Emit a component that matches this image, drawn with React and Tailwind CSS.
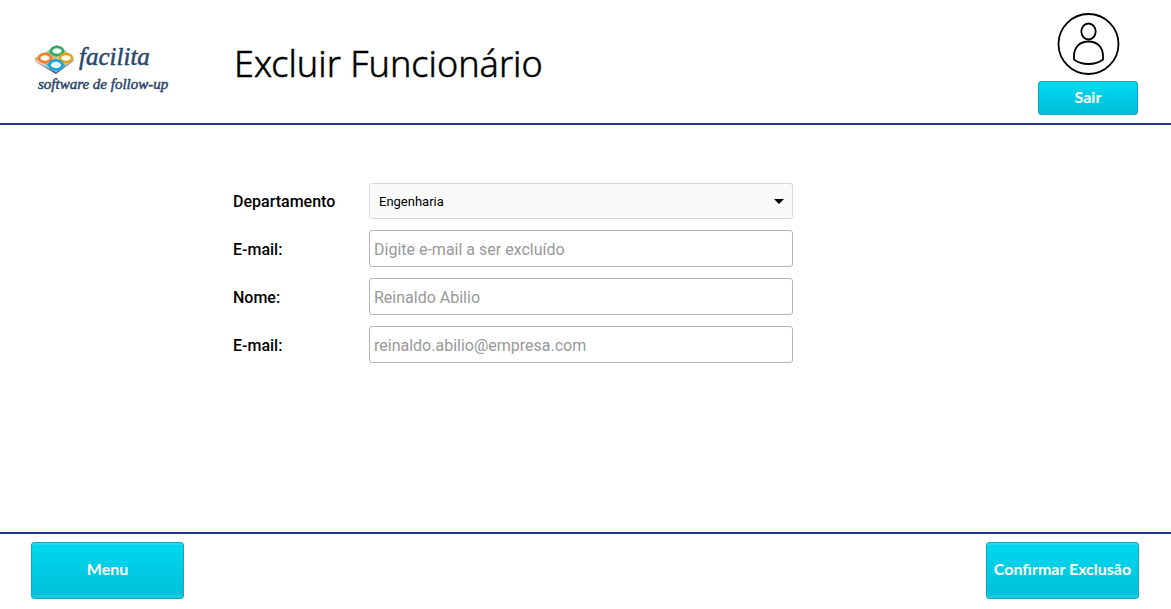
const buttonBase =
  'rounded-[3px] border border-[#14a9bd] bg-linear-to-b from-[#00d9f0] to-[#00bfd8] px-1 text-center font-[Lato,sans-serif] text-base font-bold text-white';
const footerButton =
  'h-[57px] min-w-[153px] pb-1 whitespace-nowrap shadow-[inset_0_3px_0_-1px_#20dcef,inset_0_-4px_0_-1px_#14cce0]';
const fieldBase =
  'block w-full rounded-[3px] border pt-0.5 font-[Roboto,sans-serif] text-black';
const inputBase =
  'h-[37px] border-[#b4b4b4] bg-white px-1 text-base placeholder:text-[#999999]';

function Logo() {
  return (
    <div className="relative h-16 w-[140px] text-[#2b466b]" aria-label="facilita software de follow-up">
      <svg className="absolute left-0 top-2 h-8 w-10" viewBox="0 0 40 32" aria-hidden="true">
        <defs>
          <linearGradient id="base" x1="0" y1="0" x2="1" y2="0">
            <stop offset="0" stopColor="#d8d8d8" />
            <stop offset="0.5" stopColor="#555b60" />
            <stop offset="1" stopColor="#b9b9b9" />
          </linearGradient>
        </defs>
        <path d="M1 16 22 28 40 15V17L22 30 1 18Z" fill="url(#base)" />
        <path d="M23 1 32 7 22 14 12 8Z" fill="#75c994" />
        <path d="M11 8 22 14 11 21 0 15Z" fill="#f3a162" />
        <path d="M32 7 40 14 32 21 22 14Z" fill="#e9c65a" />
        <path d="M22 14 32 21 22 28 11 21Z" fill="#52b9df" />
        <g strokeWidth="2.6">
          <ellipse cx="23" cy="7" rx="6" ry="4" fill="#f3fff4" stroke="#2fa866" />
          <ellipse cx="11" cy="14" rx="6" ry="4" fill="#fff9ed" stroke="#ee7d2b" />
          <ellipse cx="32" cy="14" rx="6" ry="4" fill="#fffde9" stroke="#dda42b" />
          <ellipse cx="22" cy="21" rx="6.5" ry="4.5" fill="#effcff" stroke="#13a5dc" />
        </g>
      </svg>
      <span className='absolute left-[45px] top-1 font-["Liberation_Serif",serif] text-[25px] leading-[34px] italic [-webkit-text-stroke:0.5px]'>
        facilita
      </span>
      <span className='absolute left-1 top-9 whitespace-nowrap font-["Liberation_Serif",serif] text-[15px] leading-6 italic [-webkit-text-stroke:0.5px]'>
        software de follow-up
      </span>
    </div>
  );
}

function UserIcon() {
  return (
    <svg className="h-16 w-16" viewBox="0 0 64 64" fill="none" stroke="black" strokeWidth="1.8" aria-hidden="true">
      <circle cx="32.500" cy="32" r="30" />
      <ellipse cx="32.500" cy="19.500" rx="7.200" ry="8" />
      <path d="M18 47.500V44C18 35 24 29.500 32.500 29.500S47 35 47 44V47.500C42.500 51 37.500 52 32.500 52S22.500 51 18 47.500Z" strokeLinejoin="round" />
    </svg>
  );
}

function Row({ id, label, children }) {
  return (
    <div className="flex items-center">
      <label htmlFor={id} className="w-[136px] shrink-0 pt-0.5 font-[Roboto,sans-serif] text-base font-medium text-black">
        {label}
      </label>
      <div className="relative min-w-0 flex-1">{children}</div>
    </div>
  );
}

export default function App() {
  return (
    <div className="flex min-h-screen flex-col bg-white">
      <header className="flex items-start border-b-2 border-[#24388a] pr-[33px] pb-2 pl-[34px]">
        <div className="w-[200px] shrink-0 pt-9">
          <Logo />
        </div>
        <h1 className='flex-1 pt-10 font-["Noto_Sans",sans-serif] text-[36px] leading-12 font-light text-black [-webkit-text-stroke:0.5px]'>
          Excluir Funcionário
        </h1>
        <div className="flex w-[100px] flex-col items-center pt-3">
          <UserIcon />
          <button type="button" className={`${buttonBase} mt-[5px] h-[34px] w-full pb-0.5`}>
            Sair
          </button>
        </div>
      </header>

      <main className="flex-1 px-[233px] pt-[58px]">
        <form className="flex max-w-[560px] flex-col gap-[11px]">
          <Row id="departamento" label="Departamento">
            <select
              id="departamento"
              className={`${fieldBase} h-9 appearance-none border-[#d8d8d8] bg-[#fafafa] px-[9px] text-[13px]`}
            >
              <option>Engenharia</option>
            </select>
            <svg className="pointer-events-none absolute top-4 right-[9px] h-[5px] w-2.5" viewBox="0 0 10 5" aria-hidden="true">
              <path d="M0 0H10L5 5Z" />
            </svg>
          </Row>
          <Row id="busca" label="E-mail:">
            <input id="busca" type="email" placeholder="Digite e-mail a ser excluído" className={`${fieldBase} ${inputBase}`} />
          </Row>
          <Row id="nome" label="Nome:">
            <input id="nome" type="text" placeholder="Reinaldo Abilio" className={`${fieldBase} ${inputBase}`} />
          </Row>
          <Row id="email" label="E-mail:">
            <input id="email" type="email" placeholder="reinaldo.abilio@empresa.com" className={`${fieldBase} ${inputBase}`} />
          </Row>
        </form>
      </main>

      <footer className="flex items-start justify-between border-t-2 border-[#24388a] pt-2 pr-8 pb-2.5 pl-[31px]">
        <button type="button" className={`${buttonBase} ${footerButton}`}>
          Menu
        </button>
        <button type="button" className={`${buttonBase} ${footerButton}`}>
          Confirmar Exclusão
        </button>
      </footer>
    </div>
  );
}
